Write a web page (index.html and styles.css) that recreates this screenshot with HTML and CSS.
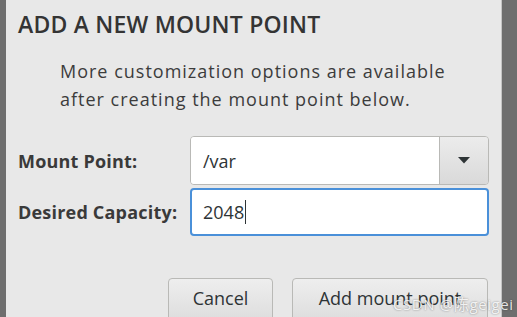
FILE: index.html
```html
<!DOCTYPE html>
<html lang="en">
<head>
    <meta charset="UTF-8">
    <meta name="viewport" content="width=device-width, initial-scale=1.0">
    <title>Add a new mount point</title>
    <link rel="stylesheet" href="styles.css">
</head>
<body>
    <div class="dialog">
        <h1 class="title">ADD A NEW MOUNT POINT</h1>

        <p class="hint">More customization options are available<br>after creating the mount point below.</p>

        <div class="form">
            <label class="label" for="mountPoint">Mount Point:</label>
            <div class="combo">
                <input class="combo-entry" type="text" id="mountPoint" value="/var">
                <button class="combo-button" type="button" aria-label="Show choices">
                    <svg width="12" height="7" viewBox="0 0 12 7"><path d="M0 0 L12 0 L6 6.5 Z" fill="#2e3436"/></svg>
                </button>
            </div>

            <label class="label" for="capacity">Desired Capacity:</label>
            <div class="entry focused">
                <span class="entry-text">2048</span><span class="caret"></span>
            </div>
        </div>

        <div class="actions">
            <button class="btn btn-cancel" type="button">Cancel</button>
            <button class="btn btn-add" type="button">Add mount point</button>
        </div>

        <div class="watermark">CSDN @陈geigei</div>
    </div>
</body>
</html>
```

FILE: styles.css
```css
html, body {
    margin: 0;
    height: 100%;
}
body {
    background-color: #6e6e6e;
    font-family: "Open Sans", "Noto Sans CJK SC", sans-serif;
    color: #2e3436;
    overflow: hidden;
}
.dialog {
    position: relative;
    margin-left: 6px;
    width: 496px;
    height: 317px;
    background-color: #e8e8e8;
    border-right: 1px solid #c4c4c4;
    box-sizing: border-box;
    padding: 0 12px;
}
.title {
    margin: 0;
    padding-top: 10px;
    font-size: 23px;
    font-weight: 600;
    line-height: 28px;
    color: #343434;
    letter-spacing: 0.2px;
}
.hint {
    margin: 19px 0 0 42px;
    font-size: 18px;
    line-height: 28px;
    color: #3c3c3c;
    letter-spacing: 1px;
}
.form {
    display: grid;
    grid-template-columns: 172px 299px;
    grid-template-rows: 49px 48px;
    row-gap: 3px;
    margin-top: 23px;
    align-items: center;
}
.label {
    font-size: 18px;
    font-weight: 700;
    color: #3a3a3a;
    letter-spacing: 0.2px;
}
.combo {
    display: flex;
    height: 49px;
    border: 1px solid #b9b9b6;
    border-radius: 4px;
    box-sizing: border-box;
    overflow: hidden;
}
.combo-entry {
    flex: 1;
    min-width: 0;
    border: none;
    outline: none;
    background: #fff;
    padding: 0 12px;
    font-family: inherit;
    font-size: 18px;
    color: #2e3436;
}
.combo-button {
    width: 49px;
    border: none;
    border-left: 1px solid #b9b9b6;
    background: linear-gradient(#ececec, #d9d9d9);
    display: flex;
    align-items: center;
    justify-content: center;
    padding: 0;
}
.entry {
    display: flex;
    align-items: center;
    height: 48px;
    border: 1px solid #b9b9b6;
    border-radius: 4px;
    background: #fff;
    box-sizing: border-box;
    padding: 0 12px;
    font-size: 18px;
}
.entry.focused {
    border: 2px solid #4a90d9;
    padding: 0 11px;
}
.caret {
    display: inline-block;
    width: 1px;
    height: 24px;
    background: #2e3436;
    margin-left: 1px;
}
.actions {
    display: flex;
    justify-content: flex-end;
    gap: 19px;
    margin-top: 42px;
    padding-right: 1px;
}
.btn {
    height: 44px;
    border: 1px solid #b9b9b6;
    border-radius: 4px;
    background: linear-gradient(#eeeeee, #dddddd);
    font-family: inherit;
    font-size: 18px;
    color: #2e3436;
    padding: 0 0 4px;
}
.btn-cancel {
    width: 105px;
}
.btn-add {
    width: 196px;
}
.watermark {
    position: absolute;
    left: 387px;
    top: 293px;
    font-size: 15px;
    color: rgba(255, 255, 255, 0.85);
    text-shadow: 0 0 2px rgba(0, 0, 0, 0.45);
    letter-spacing: 0.6px;
    white-space: nowrap;
}
```
